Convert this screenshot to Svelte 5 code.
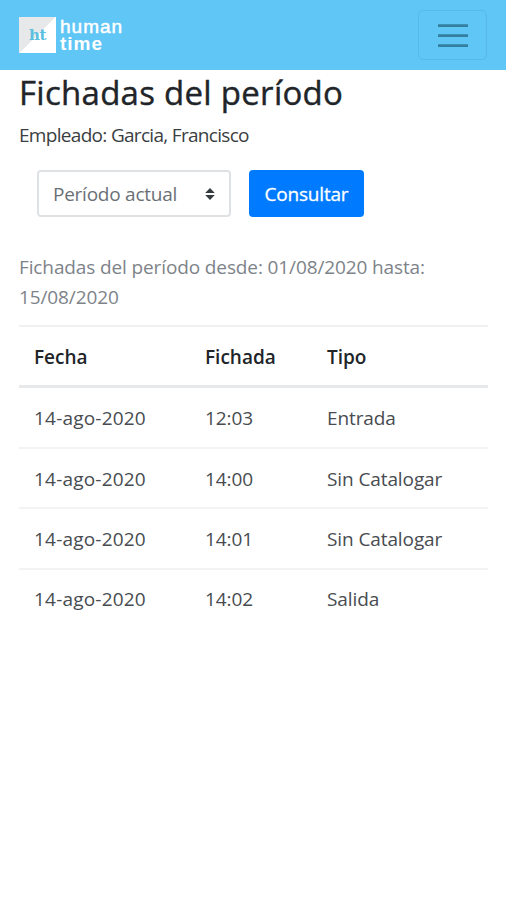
<script lang="ts">
	interface Fichada {
		fecha: string;
		hora: string;
		tipo: string;
	}

	const fichadas: Fichada[] = [
		{ fecha: '14-ago-2020', hora: '12:03', tipo: 'Entrada' },
		{ fecha: '14-ago-2020', hora: '14:00', tipo: 'Sin Catalogar' },
		{ fecha: '14-ago-2020', hora: '14:01', tipo: 'Sin Catalogar' },
		{ fecha: '14-ago-2020', hora: '14:02', tipo: 'Salida' }
	];

	const desde = '01/08/2020';
	const hasta = '15/08/2020';
</script>

<nav class="navbar">
	<div class="brand">
		<div class="brand-mark"><span>ht</span></div>
		<div class="brand-name">
			<span class="human">human</span>
			<span class="time">time</span>
		</div>
	</div>
	<button class="toggler" aria-label="Menú">
		<svg width="30" height="26" viewBox="0 0 30 26">
			<path d="M0 3.7h30M0 13.7h30M0 23.7h30" />
		</svg>
	</button>
</nav>

<main>
	<h3>Fichadas del período</h3>
	<p class="employee">Empleado: Garcia, Francisco</p>

	<div class="filters">
		<button class="select">
			<span>Período actual</span>
			<svg width="10" height="12" viewBox="0 0 10 12">
				<path d="M5 0 9.8 5H.2zM5 12 .2 7h9.6z" />
			</svg>
		</button>
		<button class="submit">Consultar</button>
	</div>

	<p class="caption">Fichadas del período desde: {desde} hasta:<br />{hasta}</p>

	<table>
		<thead>
			<tr>
				<th class="fecha">Fecha</th>
				<th class="hora">Fichada</th>
				<th>Tipo</th>
			</tr>
		</thead>
		<tbody>
			{#each fichadas as f}
				<tr>
					<td class="num">{f.fecha}</td>
					<td>{f.hora}</td>
					<td>{f.tipo}</td>
				</tr>
			{/each}
		</tbody>
	</table>
</main>

<style>
	:global(body) {
		background: #fff;
		color: #212529;
		font-family: 'Open Sans', 'Noto Sans', sans-serif;
		font-size: 19px;
	}

	.navbar {
		display: flex;
		align-items: center;
		justify-content: space-between;
		box-sizing: border-box;
		height: 70px;
		padding: 0 19px;
		background: #5fc6f6;
	}

	.brand {
		display: flex;
		align-items: center;
		gap: 4px;
	}

	.brand-mark {
		display: flex;
		align-items: center;
		justify-content: center;
		width: 37px;
		height: 36px;
		background: linear-gradient(135deg, #e6e8ea 50%, #fff 50%);
		color: #5bbfe0;
		font-family: 'DejaVu Serif', serif;
		font-weight: 700;
		font-size: 15px;
		letter-spacing: -0.5px;
	}

	.brand-name {
		display: flex;
		flex-direction: column;
		color: #fff;
		font-family: 'Liberation Sans', sans-serif;
		font-size: 19px;
		line-height: 17px;
	}

	.human {
		letter-spacing: 1px;
		-webkit-text-stroke: 0.5px #fff;
	}

	.time {
		font-weight: 700;
		letter-spacing: 1px;
	}

	.toggler {
		display: flex;
		align-items: center;
		justify-content: center;
		width: 69px;
		height: 50px;
		padding: 0;
		border: 1px solid #58b9e7;
		border-radius: 5px;
		background: transparent;
	}

	.toggler path {
		fill: none;
		stroke: #347f9f;
		stroke-width: 2.8;
	}

	main {
		padding: 0 18px 0 19px;
	}

	h3 {
		margin: 0;
		padding-top: 2px;
		font-size: 33px;
		font-weight: 500;
		line-height: 41px;
		letter-spacing: 0.28px;
		white-space: nowrap;
		-webkit-text-stroke: 0.4px #212529;
	}

	.employee {
		margin: 8px 0 0;
		color: #3b3e41;
		line-height: 29px;
		letter-spacing: -0.69px;
	}

	.filters {
		display: flex;
		gap: 18px;
		margin-top: 20px;
		padding-left: 18px;
	}

	.select,
	.submit {
		box-sizing: border-box;
		height: 47px;
		border-radius: 4px;
		font: inherit;
		white-space: nowrap;
	}

	.select {
		display: flex;
		align-items: center;
		justify-content: space-between;
		width: 194px;
		padding: 0 14px;
		border: 2px solid #dfe2e5;
		background: #fff;
		color: #6a7076;
		letter-spacing: -0.25px;
	}

	.select path {
		fill: #343a40;
	}

	.submit {
		width: 115px;
		padding: 0;
		border: none;
		background: #007bff;
		color: #fff;
		letter-spacing: -0.2px;
		-webkit-text-stroke: 0.3px #fff;
	}

	.caption {
		margin: 36px 0 0;
		color: #7d8389;
		line-height: 29.5px;
		letter-spacing: -0.12px;
		white-space: nowrap;
	}

	table {
		width: 100%;
		margin-top: 13px;
		border-collapse: separate;
		border-spacing: 0;
		table-layout: fixed;
	}

	th,
	td {
		box-sizing: border-box;
		height: 60.5px;
		padding: 2px 0 0 15px;
		text-align: left;
		white-space: nowrap;
	}

	th {
		height: 63px;
		padding-top: 1px;
		border-top: 2px solid #f0f1f2;
		border-bottom: 3px solid #e6e8ea;
		font-weight: 600;
	}

	td {
		border-bottom: 2px solid #f2f3f4;
		color: #484c50;
		letter-spacing: -0.1px;
	}

	.num {
		letter-spacing: 0.2px;
	}

	tr:last-child td {
		height: 59px;
		padding-top: 0;
		border-bottom: none;
	}

	.fecha {
		width: 171px;
	}

	.hora {
		width: 122px;
	}
</style>
